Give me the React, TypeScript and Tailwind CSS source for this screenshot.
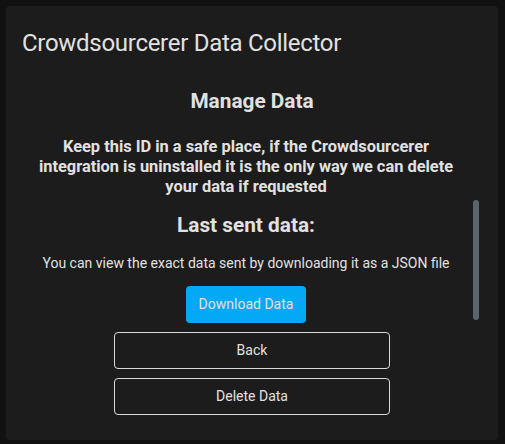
import React from "react";

export default function App() {
  return (
    <div
      className="w-[505px] h-[444px] bg-[#111111] p-[6px] text-[#e1e1e1]"
      style={{ fontFamily: "Roboto, 'Noto Sans', sans-serif" }}
    >
      <div className="relative w-[492px] h-[434px] bg-[#1c1c1c] rounded-[4px] overflow-hidden">
        <div className="pt-[21px] pl-[16px] text-[24px] leading-[32px] font-normal tracking-[-0.012em]">
          Crowdsourcerer Data Collector
        </div>
        <div className="flex flex-col items-center text-center">
          <div className="mt-[28px] text-[20.8px] leading-[28px] font-bold">Manage Data</div>
          <div className="self-stretch ml-[24px] mr-[36px] flex flex-col items-center">
            <div className="mt-[22px] text-[16.4px] leading-[20px] font-bold">
              Keep this ID in a safe place, if the Crowdsourcerer integration is uninstalled it is the only way we can delete your data if requested
            </div>
            <div className="mt-[14px] text-[20.8px] leading-[28px] font-bold">Last sent data:</div>
            <div className="mt-[14px] text-[14px] leading-[20px]">
              You can view the exact data sent by downloading it as a JSON file
            </div>
            <button className="mt-[13px] w-[120px] h-[37px] bg-[#03a9f4] rounded-[4px] text-[14px] text-[#e1e1e1]">
              Download Data
            </button>
          </div>
          <button className="mt-[9px] w-[276px] h-[37px] border border-[#d8d8d8] rounded-[4px] text-[14px] text-[#e1e1e1]">
            Back
          </button>
          <button className="mt-[9px] w-[276px] h-[37px] border border-[#d8d8d8] rounded-[4px] text-[14px] text-[#e1e1e1]">
            Delete Data
          </button>
        </div>
        <div className="absolute left-[467px] top-[194px] w-[6px] h-[120px] rounded-full bg-[#59656f]" />
      </div>
    </div>
  );
}
